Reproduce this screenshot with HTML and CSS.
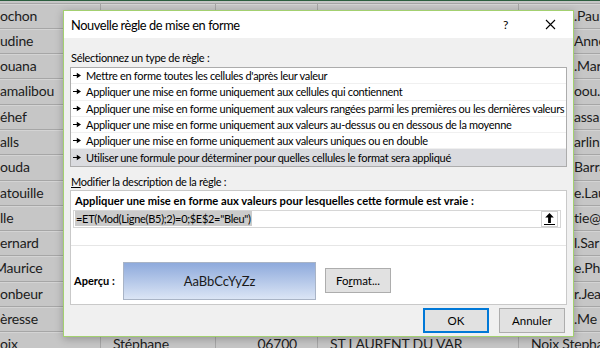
FILE: index.html
```html
<!DOCTYPE html>
<html lang="fr">
<head>
	<meta charset="UTF-8">
	<title>Nouvelle règle de mise en forme</title>
	<link rel="stylesheet" href="styles.css">
</head>
<body>
	<div class="sheet">
		<div class="top-edge"></div>
		<div class="row"><div class="c c1">ochon</div><div class="c c2"></div><div class="c c3"></div><div class="c c4"></div><div class="c c5"><span class="tail">.Paul</span></div></div>
		<div class="row"><div class="c c1">udine</div><div class="c c2"></div><div class="c c3"></div><div class="c c4"></div><div class="c c5"><span class="tail">Anne</span></div></div>
		<div class="row"><div class="c c1">ouana</div><div class="c c2"></div><div class="c c3"></div><div class="c c4"></div><div class="c c5"><span class="tail">.Mar</span></div></div>
		<div class="row"><div class="c c1">amalibou</div><div class="c c2"></div><div class="c c3"></div><div class="c c4"></div><div class="c c5"><span class="tail">oou.A</span></div></div>
		<div class="row"><div class="c c1">éhef</div><div class="c c2"></div><div class="c c3"></div><div class="c c4"></div><div class="c c5"><span class="tail">assa</span></div></div>
		<div class="row"><div class="c c1">alls</div><div class="c c2"></div><div class="c c3"></div><div class="c c4"></div><div class="c c5"><span class="tail">arlin</span></div></div>
		<div class="row"><div class="c c1">ouda</div><div class="c c2"></div><div class="c c3"></div><div class="c c4"></div><div class="c c5"><span class="tail">Barra</span></div></div>
		<div class="row"><div class="c c1">atouille</div><div class="c c2"></div><div class="c c3"></div><div class="c c4"></div><div class="c c5"><span class="tail">e.Lau</span></div></div>
		<div class="row"><div class="c c1">lle</div><div class="c c2"></div><div class="c c3"></div><div class="c c4"></div><div class="c c5"><span class="tail">tie@</span></div></div>
		<div class="row"><div class="c c1">ernard</div><div class="c c2"></div><div class="c c3"></div><div class="c c4"></div><div class="c c5"><span class="tail">l.Sar</span></div></div>
		<div class="row"><div class="c c1"><span class="cut">Maurice</span></div><div class="c c2"></div><div class="c c3"></div><div class="c c4"></div><div class="c c5"><span class="tail">e.Phi</span></div></div>
		<div class="row"><div class="c c1">onbeur</div><div class="c c2"></div><div class="c c3"></div><div class="c c4"></div><div class="c c5"><span class="tail">r.Jea</span></div></div>
		<div class="row"><div class="c c1">èresse</div><div class="c c2"></div><div class="c c3"></div><div class="c c4"></div><div class="c c5"><span class="tail">.Me</span></div></div>
		<div class="row"><div class="c c1">oix</div><div class="c c2">Stéphane</div><div class="c c3 num">06700</div><div class="c c4">ST LAURENT DU VAR</div><div class="c c5">Noix Stephane</div></div>
	</div>

	<div class="dialog">
		<div class="titlebar">
			<span class="title">Nouvelle règle de mise en forme</span>
			<span class="tb-btn">?</span>
			<span class="tb-btn">
				<svg width="11" height="11" viewBox="0 0 11 11"><path d="M1 1L10 10M10 1L1 10" stroke="#000" stroke-width="1.1" fill="none"/></svg>
			</span>
		</div>
		<div class="body">
			<div class="label">Sélectionnez un type de règle :</div>
			<div class="rule-list">
				<div class="rule"><svg class="arr" width="8" height="7" viewBox="0 0 8 7"><path d="M0 3h3.8V0.8L8 3.5 3.8 6.2V4H0z"/></svg>Mettre en forme toutes les cellules d'après leur valeur</div>
				<div class="rule"><svg class="arr" width="8" height="7" viewBox="0 0 8 7"><path d="M0 3h3.8V0.8L8 3.5 3.8 6.2V4H0z"/></svg>Appliquer une mise en forme uniquement aux cellules qui contiennent</div>
				<div class="rule"><svg class="arr" width="8" height="7" viewBox="0 0 8 7"><path d="M0 3h3.8V0.8L8 3.5 3.8 6.2V4H0z"/></svg>Appliquer une mise en forme uniquement aux valeurs rangées parmi les premières ou les dernières valeurs</div>
				<div class="rule"><svg class="arr" width="8" height="7" viewBox="0 0 8 7"><path d="M0 3h3.8V0.8L8 3.5 3.8 6.2V4H0z"/></svg>Appliquer une mise en forme uniquement aux valeurs au-dessus ou en dessous de la moyenne</div>
				<div class="rule"><svg class="arr" width="8" height="7" viewBox="0 0 8 7"><path d="M0 3h3.8V0.8L8 3.5 3.8 6.2V4H0z"/></svg>Appliquer une mise en forme uniquement aux valeurs uniques ou en double</div>
				<div class="rule selected"><svg class="arr" width="8" height="7" viewBox="0 0 8 7"><path d="M0 3h3.8V0.8L8 3.5 3.8 6.2V4H0z"/></svg>Utiliser une formule pour déterminer pour quelles cellules le format sera appliqué</div>
			</div>

			<div class="label label-2"><u>M</u>odifier la description de la règle :</div>
			<div class="desc">
				<div class="desc-top">
					<div class="desc-title">Appliquer une mise en forme aux valeurs pour lesquelles cette formule est vraie :</div>
					<div class="formula">
						<span class="formula-text"><span class="sel">=ET(Mod(Ligne(B5);2)=0;$E$2="Bleu")</span></span>
						<span class="ref-btn">
							<svg width="11" height="13" viewBox="0 0 11 13"><path d="M5.5 1L1.2 5.6h2.9V11h2.8V5.6h2.9z" fill="#000"/><path d="M0 12.5h11" stroke="#000" stroke-width="1"/></svg>
						</span>
					</div>
				</div>
				<div class="desc-bottom">
					<span class="preview-label">Aperçu :</span>
					<div class="preview">AaBbCcYyZz</div>
					<button class="btn btn-format">Fo<u>r</u>mat...</button>
				</div>
			</div>

			<div class="footer">
				<button class="btn btn-ok">OK</button>
				<button class="btn">Annuler</button>
			</div>
		</div>
	</div>
</body>
</html>
```

FILE: styles.css
```css
body {
	margin: 0;
	width: 600px;
	height: 348px;
	overflow: hidden;
	background: #c6c6c6;
	font-family: "Lato", sans-serif;
}
.sheet {
	width: 600px;
}
.top-edge {
	border-top: 1px solid #2c5e3e;
	border-bottom: 1px solid #a6a6a6;
	box-sizing: border-box;
	height: 3.5px;
}
.row {
	display: flex;
	height: 25.3px;
	box-sizing: border-box;
	border-bottom: 1px solid #a6a6a6;
	box-shadow: inset 0 1px #d4d4d4;
}
.c {
	box-sizing: border-box;
	border-right: 1px solid #a6a6a6;
	font-size: 14px;
	line-height: 24px;
	letter-spacing: -0.2px;
	color: #1c1c1c;
	white-space: nowrap;
	overflow: hidden;
	padding-left: 12px;
}
.c1 { width: 101px; padding-left: 0; }
.c2 { width: 115px; }
.c3 { width: 102px; }
.c4 { width: 201px; }
.c5 { flex: 1; border-right: none; }
.num {
	text-align: right;
	padding-right: 20px;
}
.tail {
	padding-left: 43px;
}
.cut {
	margin-left: -6px;
}

/* boite de dialogue */
.dialog {
	position: absolute;
	left: 63px;
	top: 10px;
	width: 511px;
	height: 327px;
	box-sizing: border-box;
	border: 1px solid #a3d070;
	background: #f0f0f0;
	box-shadow: 0 2px 8px rgba(0,0,0,0.25);
	display: flex;
	flex-direction: column;
	color: #000;
	font-family: "Lato", sans-serif;
}
.titlebar {
	height: 27px;
	background: #fff;
	display: flex;
	align-items: center;
	padding-left: 7px;
	font-size: 12.8px;
	letter-spacing: -0.4px;
}
.title {
	flex: 1;
}
.tb-btn {
	width: 45px;
	height: 27px;
	display: flex;
	align-items: center;
	justify-content: center;
	font-size: 12px;
}
.body {
	flex: 1;
	padding: 0 6px;
	display: flex;
	flex-direction: column;
	font-size: 11px;
	letter-spacing: -0.3px;
}
.label {
	margin-top: 11px;
	height: 18px;
	line-height: 18px;
	padding-left: 1px;
}
.label-2 {
	margin-top: 6px;
	height: 17px;
	line-height: 17px;
}
.rule-list {
	border: 1px solid #acacac;
	background: #fff;
}
.rule {
	height: 16.3px;
	box-sizing: border-box;
	border-bottom: 1px solid #f0f0f0;
	display: flex;
	align-items: center;
	padding-left: 2px;
	white-space: nowrap;
	overflow: hidden;
}
.rule:last-child {
	border-bottom: none;
}
.rule.selected {
	background: #dadbdf;
}
.arr {
	margin-right: 5px;
	flex: none;
}
.desc {
	border: 1px solid #c9c9c9;
	background: #fff;
	height: 115px;
	box-sizing: border-box;
	display: flex;
	flex-direction: column;
}
.desc-top {
	height: 54px;
	border-bottom: 1px solid #e6e6e6;
}
.desc-title {
	font-weight: bold;
	font-size: 11.2px;
	letter-spacing: 0;
	padding: 1px 0 0 4px;
	height: 18px;
	line-height: 18px;
}
.formula {
	margin-left: 2px;
	width: 488px;
	height: 18px;
	box-sizing: border-box;
	border: 1px solid #d6d6d6;
	display: flex;
	align-items: center;
}
.formula-text {
	flex: 1;
	padding-left: 1px;
}
.sel {
	background: #cbcbcb;
	padding: 1px 1px;
}
.ref-btn {
	width: 15px;
	height: 14px;
	margin-right: 2px;
	border: 1px solid #d0d0d0;
	display: flex;
	align-items: center;
	justify-content: center;
}
.desc-bottom {
	flex: 1;
	display: flex;
	align-items: center;
	padding: 12px 0 0 3px;
}
.preview-label {
	font-weight: bold;
	width: 49px;
	letter-spacing: 0;
}
.preview {
	width: 193px;
	height: 38px;
	box-sizing: border-box;
	border: 1px solid #a9b4c6;
	background: linear-gradient(#8eaadc, #dbe5f5);
	display: flex;
	align-items: center;
	justify-content: center;
	font-size: 13px;
	letter-spacing: 0;
	color: #1a1a1a;
}
.btn {
	font-family: "Lato", sans-serif;
	font-size: 11.5px;
	color: #000;
	background: #e1e1e1;
	border: 1px solid #adadad;
	width: 66px;
	height: 25px;
	padding: 0;
}
.btn-format {
	margin-left: 9px;
}
.footer {
	display: flex;
	justify-content: flex-end;
	gap: 10px;
	padding: 3px 2px 0 0;
}
.btn-ok {
	border: 1px solid #0078d7;
	box-shadow: inset 0 0 0 1px #0078d7;
}
```
